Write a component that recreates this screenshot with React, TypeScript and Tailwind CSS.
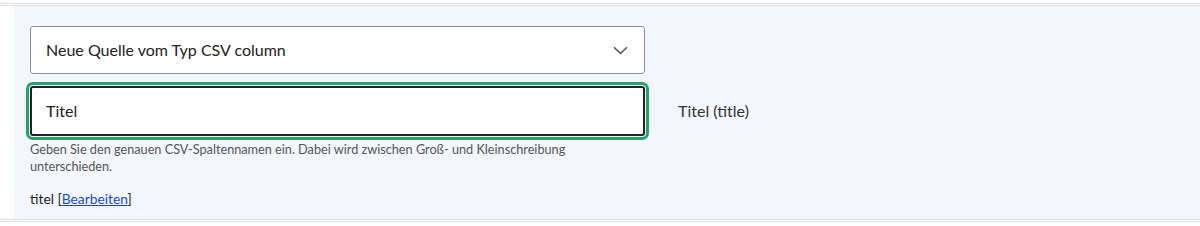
import React from "react";

export default function App() {
  return (
    <div className="w-[1200px] h-[226px] bg-white font-['Lato','Noto_Sans',sans-serif]">
      <div className="pt-[3px]">
        <div className="border-y-[3px] border-double border-[#e0e0da] pl-[14px] bg-white">
          <div className="bg-[#f3f6fd] pl-[16px] pt-[20px] pb-[10px] h-[213px]">
            <div className="relative w-[615px] h-[48px] rounded-[3px] border border-[#8e8e8e] bg-white flex items-center pl-[15px] text-[16px] text-[#222]">
              Neue Quelle vom Typ CSV column
              <svg
                className="absolute right-[16px] top-[19px]"
                width="15"
                height="9"
                viewBox="0 0 15 9"
                fill="none"
              >
                <path d="M1 1.2 L7.5 7.5 L14 1.2" stroke="#555" strokeWidth="1.6" />
              </svg>
            </div>
            <div className="flex items-center mt-[12px]">
              <div className="w-[615px] h-[50px] rounded-[3px] border-2 border-[#222] bg-white shadow-[0_0_0_1px_#ffffff,0_0_0_4px_#24a368] flex items-center pl-[14px] text-[16px] text-[#222]">
                Titel
              </div>
              <div className="ml-[33px] text-[16px] text-[#333]">Titel (title)</div>
            </div>
            <div className="w-[600px] mt-[5px] text-[12.7px] leading-[17px] text-[#555]">
              Geben Sie den genauen CSV-Spaltennamen ein. Dabei wird zwischen Groß- und Kleinschreibung unterschieden.
            </div>
            <div className="mt-[15px] text-[13.8px] leading-[17px] text-[#222]">
              titel [<a href="#" className="text-[#1a48c8] underline">Bearbeiten</a>]
            </div>
          </div>
        </div>
      </div>
    </div>
  );
}
